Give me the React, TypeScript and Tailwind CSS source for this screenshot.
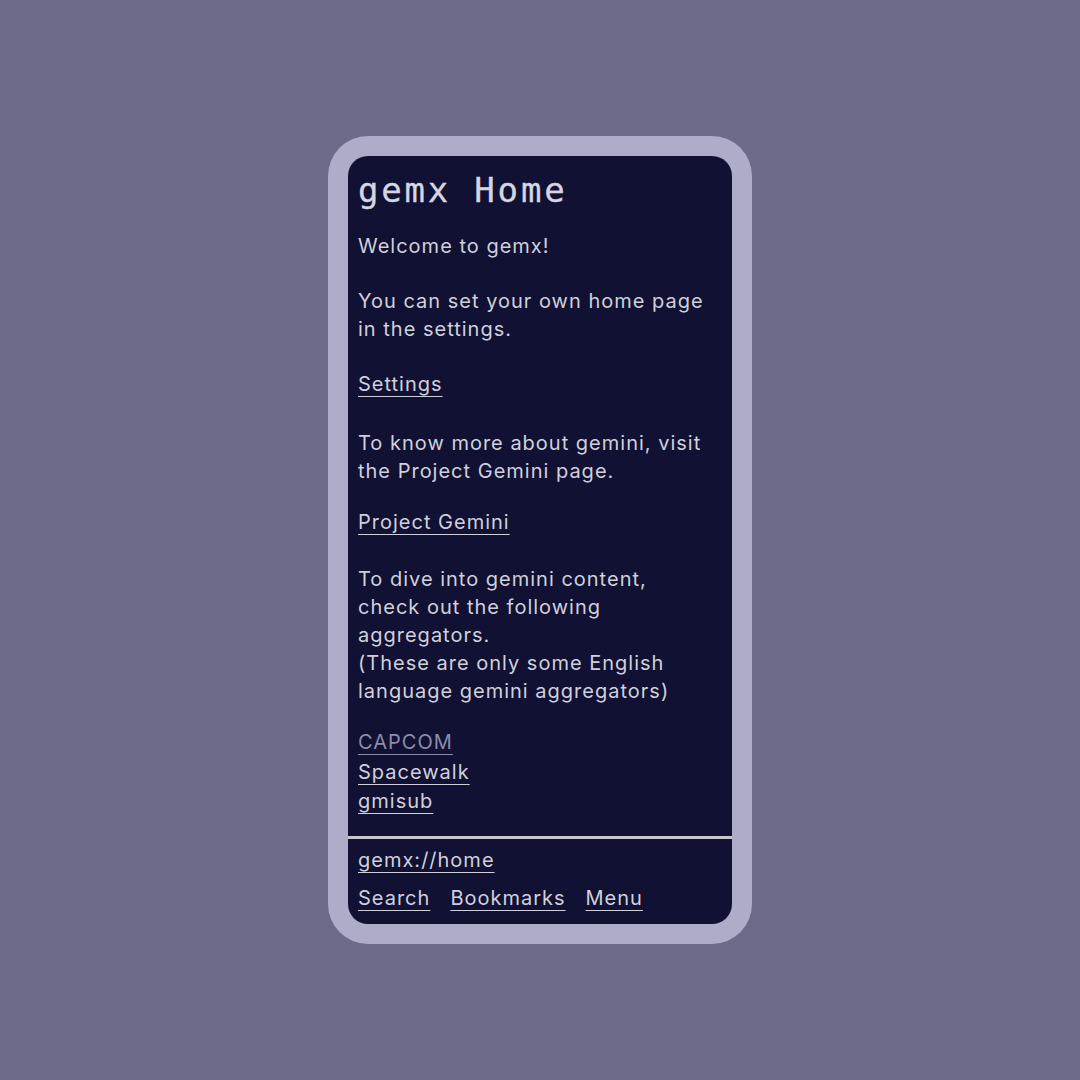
const body = { fontFamily: 'Inter, "Noto Sans", sans-serif' };
const mono = { fontFamily: '"DejaVu Sans Mono", "Liberation Mono", monospace' };

function Link({ children, dim = false }: { children: React.ReactNode; dim?: boolean }) {
  return (
    <a
      href="#"
      className={
        'underline decoration-1 underline-offset-[5px] ' +
        (dim ? 'text-[#8c8ca8] decoration-[#8c8ca8]' : 'text-[#d0d0dc] decoration-[#d0d0dc]')
      }
    >
      {children}
    </a>
  );
}

export default function App() {
  return (
    <div className="w-[1080px] h-[1080px] bg-[#6b6b89] flex items-center justify-center">
      <div className="w-[424px] h-[808px] rounded-[40px] bg-[#adadca] p-5">
        <div
          className="h-full rounded-[20px] bg-[#111133] flex flex-col overflow-hidden text-[#d0d0dc] text-[20px] leading-[28px] tracking-[1px]"
          style={body}
        >
          <div className="flex-1 pl-[10px] pr-[20px] pt-[14px]">
            <h1
              className="text-[34px] leading-[40px] tracking-[2.8px] text-[#d6d6e0] [-webkit-text-stroke:0.3px_#d6d6e0]"
              style={{ ...mono, fontWeight: 400 }}
            >
              gemx Home
            </h1>
            <p className="mt-[22px]">Welcome to gemx!</p>
            <p className="mt-[27px]">You can set your own home page in the settings.</p>
            <div className="mt-[26px] leading-[30px]">
              <Link>Settings</Link>
            </div>
            <p className="mt-[30px]">To know more about gemini, visit the Project Gemini page.</p>
            <div className="mt-[22px] leading-[30px]">
              <Link>Project Gemini</Link>
            </div>
            <p className="mt-[28px]">
              To dive into gemini content, check out the following aggregators.
              <br />
              (These are only some English language gemini aggregators)
            </p>
            <div className="mt-[23px] flex flex-col items-start leading-[29.5px]">
              <Link dim>CAPCOM</Link>
              <Link>Spacewalk</Link>
              <Link>gmisub</Link>
            </div>
          </div>
          <div className="h-[3px] bg-[#c8c8cc]" />
          <div className="px-[10px] pt-[6px] pb-[11px]">
            <div className="leading-[30px]">
              <Link>gemx://home</Link>
            </div>
            <div className="mt-[8px] flex gap-5 leading-[30px]">
              <Link>Search</Link>
              <Link>Bookmarks</Link>
              <Link>Menu</Link>
            </div>
          </div>
        </div>
      </div>
    </div>
  );
}
